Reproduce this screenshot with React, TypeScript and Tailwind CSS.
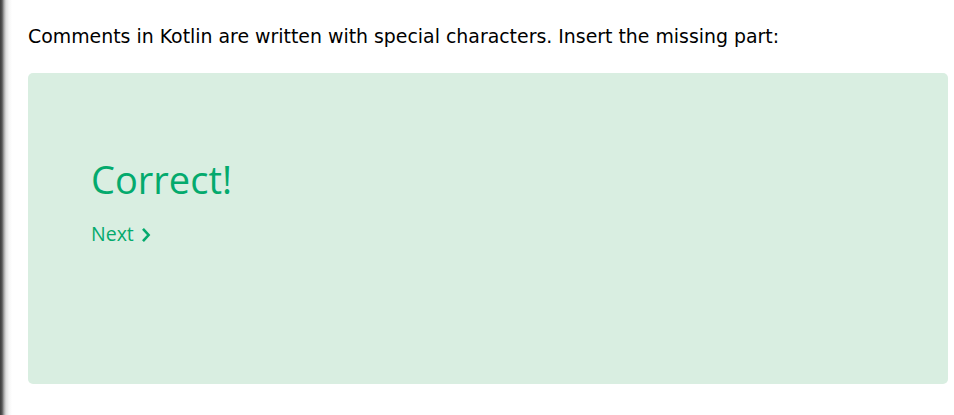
export default function App() {
  return (
    <div className="flex h-[415px] w-[954px] bg-white overflow-hidden">
      <div className="w-[12px] h-full shrink-0 bg-[linear-gradient(to_right,#3a3a3a_0px,#555555_2px,#a8a8a8_4px,#dedede_6px,#f6f6f6_9px,#ffffff_12px)]" />
      <div className="flex-1 pl-[16px] pr-[6px]">
        <p className="mt-[24px] text-[18.9px] leading-[24px] text-black" style={{ fontFamily: '"DejaVu Sans", Verdana, sans-serif' }}>
          Comments in Kotlin are written with special characters. Insert the missing part:
        </p>
        <div className="mt-[25px] h-[311px] rounded-[5px] bg-[#d9eee1] pl-[63px] pt-[82px]" style={{ fontFamily: '"Open Sans", "Noto Sans", sans-serif' }}>
          <div className="text-[38px] leading-[48px] text-[#04aa6d]">Correct!</div>
          <div className="mt-[19px] flex items-center gap-[7px] text-[19.5px] leading-[24px] text-[#04aa6d]">
            <span>Next</span>
            <svg width="10" height="16" viewBox="0 0 10 16" fill="none" className="mt-[2px]">
              <path d="M2 1.8l5.6 6.2-5.6 6.2" stroke="#04aa6d" strokeWidth="2.6" />
            </svg>
          </div>
        </div>
      </div>
    </div>
  );
}
